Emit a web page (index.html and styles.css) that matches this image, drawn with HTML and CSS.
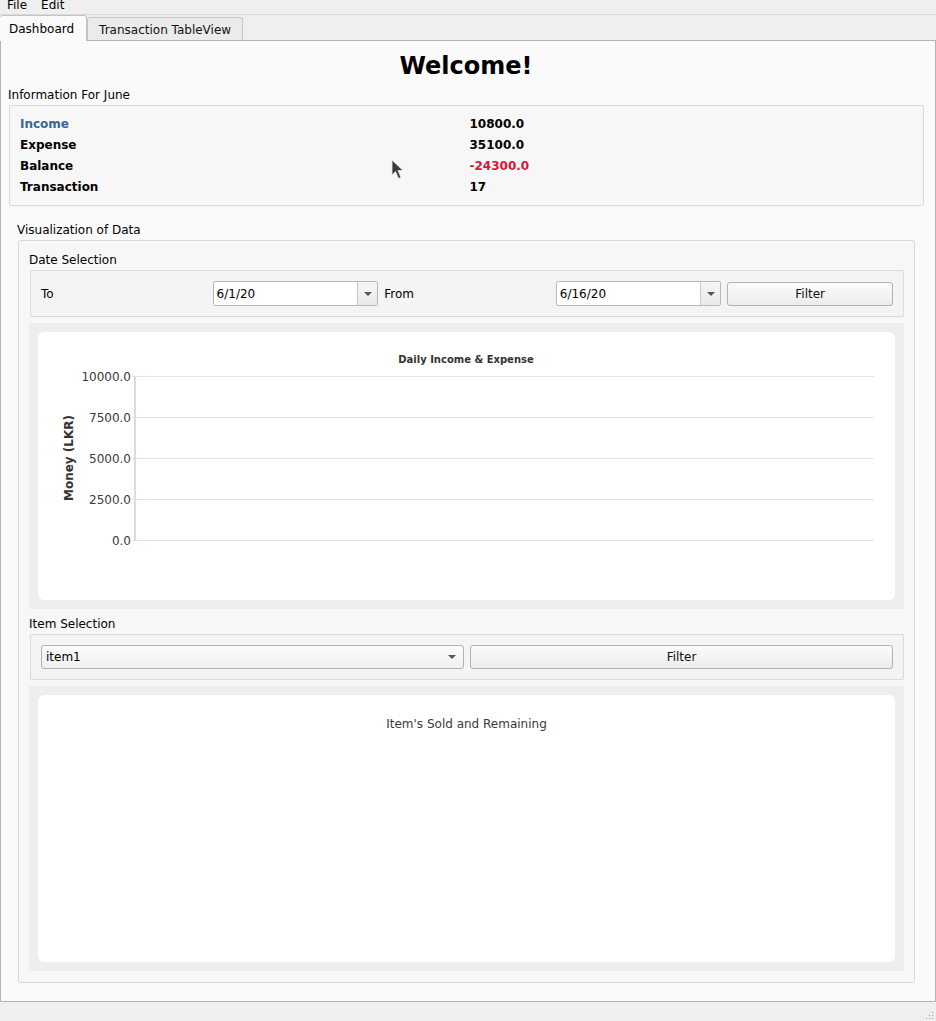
FILE: index.html
```html
<!DOCTYPE html>
<html>
<head>
<meta charset="utf-8">
<title>Dashboard</title>
<link rel="stylesheet" href="styles.css">
</head>
<body>
<div class="menubar"><span>File</span><span>Edit</span></div>
<div class="tabbar">
  <div class="tab active">Dashboard</div>
  <div class="tab">Transaction TableView</div>
</div>
<div class="panel">
  <h1 class="welcome">Welcome!</h1>
  <div class="group-title info-title">Information For June</div>
  <div class="frame info">
    <div class="lbl income">Income</div><div class="val">10800.0</div>
    <div class="lbl">Expense</div><div class="val">35100.0</div>
    <div class="lbl">Balance</div><div class="val neg">-24300.0</div>
    <div class="lbl">Transaction</div><div class="val">17</div>
  </div>
  <div class="viz">
    <div class="group-title viz-title">Visualization of Data</div>
    <div class="frame viz-frame">
      <div class="group-title sub-title">Date Selection</div>
      <div class="frame sub date-row">
        <div class="field-label">To</div>
        <div class="dateedit"><span class="de-text">6/1/20</span><span class="de-btn"><i class="arrow"></i></span></div>
        <div class="field-label">From</div>
        <div class="dateedit"><span class="de-text">6/16/20</span><span class="de-btn"><i class="arrow"></i></span></div>
        <div class="button">Filter</div>
      </div>
      <div class="chart-wrap chart-line">
        <div class="chart-card">
          <svg class="chart-svg" width="857" height="268">
            <text class="c-title" x="428" y="27">Daily Income &amp; Expense</text>
            <g class="grid">
              <line x1="94" y1="44.5" x2="836" y2="44.5"/>
              <line x1="94" y1="85.5" x2="836" y2="85.5"/>
              <line x1="94" y1="126.5" x2="836" y2="126.5"/>
              <line x1="94" y1="167.5" x2="836" y2="167.5"/>
              <line x1="94" y1="208.5" x2="836" y2="208.5"/>
            </g>
            <line class="axis" x1="97" y1="44" x2="97" y2="209"/>
            <g class="ticks">
              <text x="93" y="45">10000.0</text>
              <text x="93" y="86">7500.0</text>
              <text x="93" y="127">5000.0</text>
              <text x="93" y="168">2500.0</text>
              <text x="93" y="209">0.0</text>
            </g>
            <text class="y-title" transform="translate(31 126) rotate(-90)">Money (LKR)</text>
          </svg>
        </div>
      </div>
      <div class="group-title sub-title item-title">Item Selection</div>
      <div class="frame sub item-row">
        <div class="combo"><span>item1</span><i class="arrow"></i></div>
        <div class="button">Filter</div>
      </div>
      <div class="chart-wrap chart-pie">
        <div class="chart-card">
          <div class="pie-title">Item's Sold and Remaining</div>
        </div>
      </div>
    </div>
  </div>
  <svg class="cursor" width="14" height="22" viewBox="0 0 14 22">
    <path d="M1 1 L1 16 L4.5 12.5 L7.5 19.5 L10 18.5 L7 11.5 L12 11.5 Z" fill="#3c3c3c" stroke="#e8e8e8" stroke-width="0.8" stroke-linejoin="round"/>
  </svg>
</div>
<div class="statusbar">
  <svg class="grip" width="8" height="8" viewBox="0 0 8 8">
    <rect x="6" y="0" width="1" height="1" fill="#9a9a9a"/>
    <rect x="3" y="3" width="1" height="1" fill="#9a9a9a"/>
    <rect x="6" y="3" width="1" height="1" fill="#9a9a9a"/>
    <rect x="0" y="6" width="1" height="1" fill="#9a9a9a"/>
    <rect x="3" y="6" width="1" height="1" fill="#9a9a9a"/>
    <rect x="6" y="6" width="1" height="1" fill="#9a9a9a"/>
  </svg>
</div>
</body>
</html>
```

FILE: styles.css
```css
* { box-sizing: border-box; }

html, body {
  margin: 0;
  padding: 0;
}

body {
  width: 936px;
  height: 1021px;
  overflow: hidden;
  background: #efefef;
  font-family: "DejaVu Sans", "Noto Sans", sans-serif;
  font-size: 12px;
  color: #000;
}

/* menu bar */
.menubar {
  height: 15px;
  border-bottom: 1px solid #d9d9d9;
  display: flex;
  line-height: 10px;
  background: #efefef;
}
.menubar span {
  padding: 0 7px;
}

/* tabs */
.tabbar {
  height: 25px;
  display: flex;
  align-items: flex-end;
  position: relative;
  z-index: 2;
}
.tab {
  height: 23px;
  line-height: 24px;
  padding: 0 11px;
  border: 1px solid #c4c4c4;
  border-bottom: none;
  border-radius: 3px 3px 0 0;
  background: #ebebeb;
  color: #111;
}
.tab.active {
  height: 26px;
  line-height: 27px;
  margin-bottom: -1px;
  padding: 0 12px 0 9px;
  border-left: none;
  background: #fafafa;
  color: #000;
}

/* main panel */
.panel {
  position: relative;
  width: 936px;
  background: #fafafa;
  border: 1px solid #b4b4b4;
  padding: 0 11px 18px 7px;
}

.welcome {
  margin: 7px 0 0;
  height: 36px;
  line-height: 36px;
  text-align: center;
  font-size: 24px;
  font-weight: bold;
}

.group-title {
  height: 17px;
  line-height: 17px;
}
.info-title {
  margin-top: 3px;
  margin-bottom: 1px;
}

.frame {
  margin-left: 1px;
  border: 1px solid #dadada;
  border-radius: 2px;
}

.info {
  background: #f7f7f7;
  padding: 8px 10px 7px 10px;
  display: grid;
  grid-template-columns: 1fr 1fr;
  column-gap: 6px;
  grid-auto-rows: 21px;
  line-height: 21px;
  font-weight: bold;
}
.info .income { color: #346799; }
.info .neg { color: #dc143c; }

/* visualization */
.viz {
  padding: 0 0 0 9px;
  margin-right: 9px;
}
.viz-title {
  margin-top: 16px;
  margin-bottom: 1px;
}
.viz-frame {
  background: #f7f7f7;
  padding: 11px 10px 11px 10px;
}
.sub-title {
  margin-bottom: 1px;
}
.item-title {
  margin-top: 7px;
}
.sub {
  background: #f4f4f4;
}

.date-row {
  display: grid;
  grid-template-columns: repeat(5, 1fr);
  column-gap: 6px;
  align-items: center;
  padding: 10px 10px 10px 10px;
}
.field-label {
  padding-top: 2px;
  line-height: 23px;
}

.dateedit {
  height: 25px;
  display: flex;
  border: 1px solid #b8b8b8;
  border-radius: 2px;
  background: #fff;
}
.de-text {
  flex: 1;
  padding: 2px 0 0 3px;
  line-height: 21px;
}
.de-btn {
  width: 20px;
  border-left: 1px solid #c8c8c8;
  background: linear-gradient(#f6f6f6, #e9e9e9);
  display: flex;
  align-items: center;
  justify-content: center;
  border-radius: 0 1px 1px 0;
}
.arrow {
  display: block;
  width: 0;
  height: 0;
  border-left: 4px solid transparent;
  border-right: 4px solid transparent;
  border-top: 4px solid #555;
}

.button {
  height: 24px;
  line-height: 22px;
  text-align: center;
  border: 1px solid #b2b2b2;
  border-radius: 3px;
  background: linear-gradient(#fbfbfb, #ececec);
  color: #111;
}

.chart-wrap {
  margin-top: 6px;
  background: #eeeeee;
  padding: 9px;
}
.chart-line { height: 286px; }
.chart-pie { height: 285px; }
.chart-card {
  height: 100%;
  background: #fff;
  border-radius: 6px;
}
.chart-svg {
  display: block;
}
.c-title {
  font-family: "DejaVu Sans", sans-serif;
  font-size: 10px;
  font-weight: bold;
  fill: #333;
  text-anchor: middle;
  dominant-baseline: central;
}
.grid line {
  stroke: #e3e3e3;
  stroke-width: 1;
}
.axis {
  stroke: #dcdcdc;
  stroke-width: 2;
}
.ticks text {
  font-family: "DejaVu Sans", sans-serif;
  font-size: 12px;
  fill: #3a3a3a;
  text-anchor: end;
  dominant-baseline: central;
}
.y-title {
  font-family: "DejaVu Sans", sans-serif;
  font-size: 12px;
  font-weight: bold;
  fill: #333;
  text-anchor: middle;
  dominant-baseline: central;
}

.item-row {
  display: grid;
  grid-template-columns: 1fr 1fr;
  column-gap: 6px;
  padding: 10px 10px 10px 10px;
}
.item-row .button {
  height: 24px;
  line-height: 22px;
}
.combo {
  height: 24px;
  display: flex;
  align-items: center;
  justify-content: space-between;
  padding: 0 7px 0 4px;
  border: 1px solid #b2b2b2;
  border-radius: 3px;
  background: linear-gradient(#fbfbfb, #f0f0f0);
}

.pie-title {
  padding-top: 21px;
  line-height: 16px;
  text-align: center;
  color: #3a3a3a;
}

/* overlay mouse cursor */
.cursor {
  position: absolute;
  left: 390px;
  top: 118px;
}

.statusbar {
  height: 19px;
  position: relative;
  background: #efefef;
}
.grip {
  position: absolute;
  right: 2px;
  bottom: 1px;
}
```
